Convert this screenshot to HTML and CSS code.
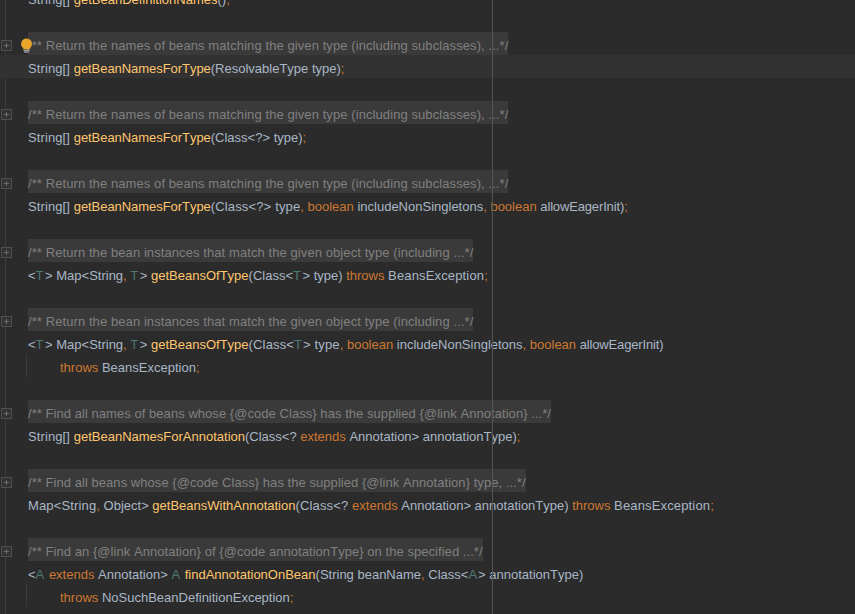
FILE: index.html
```html
<!DOCTYPE html>
<html lang="en">
<head>
<meta charset="utf-8">
<title>Editor</title>
<link rel="stylesheet" href="styles.css">
</head>
<body>
<div class="editor">
  <div class="gutter-line"></div>
  <div class="margin-line"></div>
  <div class="lines">
  <div class="row"><span class="c"><span class="s">String[] </span><span class="m">getBeanDefinitionNames</span>()<span class="k">;</span></span></div>
  <div class="row"></div>
  <div class="row"><span class="fold"></span><span class="doc">/** Return the names of beans matching the given type (including subclasses), ...*/</span><svg class="bulb" viewBox="0 0 12 14"><path d="M6 0.5a5 5 0 0 0-3 9v1h6v-1a5 5 0 0 0-3-9z" fill="#eaa62b"/><path d="M3.2 11.5h5.6M3.8 13h4.4" stroke="#c9c9c9" stroke-width="1"/></svg></div>
  <div class="row current"><span class="c"><span class="s">String[] </span><span class="m n">getBeanNamesForType</span>(ResolvableType type)<span class="k">;</span></span></div>
  <div class="row"></div>
  <div class="row"><span class="fold"></span><span class="doc">/** Return the names of beans matching the given type (including subclasses), ...*/</span></div>
  <div class="row"><span class="c"><span class="s">String[] </span><span class="m n">getBeanNamesForType</span>(Class&lt;?&gt; type)<span class="k">;</span></span></div>
  <div class="row"></div>
  <div class="row"><span class="fold"></span><span class="doc">/** Return the names of beans matching the given type (including subclasses), ...*/</span></div>
  <div class="row"><span class="c"><span class="s">String[] </span><span class="m n">getBeanNamesForType</span><span class="w">(Class&lt;?&gt; type</span><span class="k">, boolean</span> includeNonSingletons<span class="k">, boolean</span> <span class="nn">allowEagerInit</span>)<span class="k">;</span></span></div>
  <div class="row"></div>
  <div class="row"><span class="fold"></span><span class="doc">/** Return the bean instances that match the given object type (including ...*/</span></div>
  <div class="row"><span class="c">&lt;<span class="t tt">T</span>&gt; Map&lt;String<span class="k">,</span> <span class="t tt">T</span>&gt; <span class="m">getBeansOfType</span>(Class&lt;<span class="t tt">T</span>&gt; type) <span class="k">throws</span> <span class="e">BeansException</span><span class="k">;</span></span></div>
  <div class="row"></div>
  <div class="row"><span class="fold"></span><span class="doc">/** Return the bean instances that match the given object type (including ...*/</span></div>
  <div class="row"><span class="c">&lt;<span class="t tt">T</span>&gt; Map&lt;String<span class="k">,</span> <span class="t tt">T</span>&gt; <span class="m">getBeansOfType</span><span class="w">(Class&lt;<span class="t">T</span>&gt; type</span><span class="k">, boolean</span> includeNonSingletons<span class="k">, boolean</span> <span class="nn">allowEagerInit</span>)</span></div>
  <div class="row cont"><span class="c"><span class="k">throws</span> BeansException<span class="k">;</span></span></div>
  <div class="row"></div>
  <div class="row"><span class="fold"></span><span class="doc tight">/** Find all names of beans whose {@code Class} has the supplied {@link Annotation} ...*/</span></div>
  <div class="row"><span class="c"><span class="s">String[] </span><span class="m">getBeanNamesForAnnotation</span>(Class&lt;? <span class="k">extends</span> Annotation&gt; annotationType)<span class="k">;</span></span></div>
  <div class="row"></div>
  <div class="row"><span class="fold"></span><span class="doc tight">/** Find all beans whose {@code Class} has the supplied {@link Annotation} type, ...*/</span></div>
  <div class="row"><span class="c"><span class="w">Map&lt;String</span><span class="k">,</span> Object&gt; <span class="m">getBeansWithAnnotation</span><span class="w">(Class&lt;? </span><span class="k">extends</span> Annotation&gt; annotationType) <span class="k">throws</span> <span class="e">BeansException</span><span class="k">;</span></span></div>
  <div class="row"></div>
  <div class="row"><span class="fold"></span><span class="doc tight">/** Find an {@link Annotation} of {@code annotationType} on the specified ...*/</span></div>
  <div class="row"><span class="c">&lt;<span class="t">A</span> <span class="k">extends</span> Annotation&gt; <span class="t">A</span> <span class="m">findAnnotationOnBean</span>(String beanName<span class="k">,</span> Class&lt;<span class="t">A</span>&gt; annotationType)</span></div>
  <div class="row cont"><span class="c"><span class="k">throws</span> NoSuchBeanDefinitionException<span class="k">;</span></span></div>
  </div>
</div>
</body>
</html>
```
FILE: styles.css
```css
html, body { margin: 0; padding: 0; height: 100%; overflow: hidden; background: #2b2b2b; }
.editor { position: relative; height: 614px; overflow: hidden; font: 13px/27px "Liberation Sans", Arial, sans-serif; font-kerning: none; color: #a9b7c6; }
.lines { margin-top: -14px; }
.row { position: relative; height: 23px; padding-left: 28px; white-space: pre; }
.current { background: #323232; }
.cont { padding-left: 60px; }
.cont::before { content: ""; position: absolute; left: 26px; top: 0; height: 23px; width: 1px; background: #3c3c3c; }
.c { color: #a9b7c6; }
.s { letter-spacing: 0.1px; }
.m { color: #ffc66d; }
.n { letter-spacing: -0.05px; }
.nn { letter-spacing: -0.15px; }
.w { letter-spacing: 0.15px; }
.e { letter-spacing: 0.15px; }
.k { color: #cc7832; }
.t { color: #507874; letter-spacing: 1px; }
.tt { letter-spacing: 1.5px; }
.doc { display: inline-block; height: 23px; background: #3a3a3a; color: #808080; letter-spacing: 0.085px; }
.tight { letter-spacing: 0.05px; }
.fold { position: absolute; left: 1px; top: 8px; width: 9px; height: 9px; border: 1px solid #4f4f4f; background: #313335; }
.fold::before { content: ""; position: absolute; left: 2px; top: 4px; width: 5px; height: 1px; background: #6a6a6a; }
.fold::after { content: ""; position: absolute; left: 4px; top: 2px; width: 1px; height: 5px; background: #6a6a6a; }
.bulb { position: absolute; left: 20px; top: 6px; width: 13px; height: 15px; }
.gutter-line { position: absolute; left: 5px; top: 0; bottom: 0; width: 1px; background: #3c3c3c; }
.margin-line { position: absolute; left: 492px; top: 0; bottom: 0; width: 1px; background: #555; z-index: 2; }
```
